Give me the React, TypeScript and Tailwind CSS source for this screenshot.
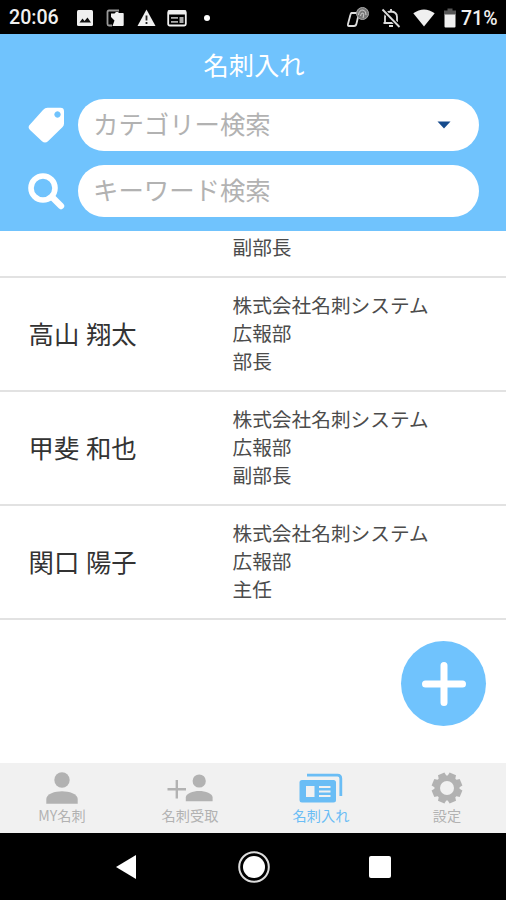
import type { ReactNode } from "react";

type Card = {
  name: string;
  company: string;
  department: string;
  title: string;
};

const cards: Card[] = [
  { name: "高山 翔太", company: "株式会社名刺システム", department: "広報部", title: "部長" },
  { name: "甲斐 和也", company: "株式会社名刺システム", department: "広報部", title: "副部長" },
  { name: "関口 陽子", company: "株式会社名刺システム", department: "広報部", title: "主任" },
];

function StatusBar() {
  return (
    <div className="flex h-[34px] shrink-0 items-center bg-black pt-0.5 pl-[9px] pr-[7px] text-[#f0f0f0]">
      <span className="w-[67px] font-[Roboto] text-[19.6px] leading-5 font-medium">
        20:06
      </span>
      {/* Notification icons */}
      <svg width="18" height="18" viewBox="0 0 18 18" className="mr-[12px]">
        <rect x="1" y="1" width="16" height="16" rx="1.5" fill="currentColor" />
        <path d="M3.5 13.5 L6.5 9.5 L8.5 12 L11.5 8.5 L15 13.5Z" fill="#111" />
      </svg>
      <svg width="18" height="18" viewBox="0 0 18 18" className="mr-[13px]">
        <path d="M13 1.5H3Q1.5 1.5 1.5 3V15Q1.5 16.5 3 16.5H6" fill="none" stroke="#999" strokeWidth="1.8" />
        <path d="M5 4.5H8.5L10 3H12L13 4H17Q17.700 4 17.7 4.7V16Q17.7 17 16.7 17H6.5L8.5 11.5L5 8Z" fill="currentColor" />
      </svg>
      <svg width="19" height="18" viewBox="0 0 19 18" className="mr-[11px]">
        <path d="M9.5 0.5L18.5 17H0.5Z" fill="currentColor" />
        <path d="M8.6 6.5h1.8v5H8.6zM8.6 13h1.8v2H8.6z" fill="#222" />
      </svg>
      <svg width="20" height="18" viewBox="0 0 20 18" className="mr-[17px]">
        <rect x="1.2" y="2" width="17.6" height="14.5" rx="1.5" fill="none" stroke="currentColor" strokeWidth="1.8" />
        <path d="M1 1.5h18v4H1z" fill="currentColor" />
        <path d="M4 8h7v1.8H4zM4 12h7v1.8H4zM12.5 8h4v6h-4z" fill="#aaa" />
      </svg>
      <span className="size-[6px] rounded-full bg-white" />

      {/* System icons */}
      <div className="ml-auto flex items-center">
        <svg width="24" height="24" viewBox="0 0 24 24" className="mr-[11px]" fill="none">
          <path d="M5.5 7H13L10.5 17.5Q10 20 8 20H3Q1.5 20 2 18L4.5 8.5Q4.8 7 6 7Z" stroke="#ddd" strokeWidth="1.8" strokeLinejoin="round" />
          <circle cx="16.5" cy="7.5" r="6" fill="#777" stroke="#aaa" />
          <path d="M12.5 9Q13 4 17 4Q20.5 5 20 9M14.5 10Q15 6.5 17 7Q18.5 8 17 12" stroke="#ccc" />
        </svg>
        <svg width="20" height="22" viewBox="0 0 20 22" className="mr-[12px]" fill="none" stroke="#ddd" strokeWidth="1.8">
          <path d="M4 16V10Q4 5 10 4.5Q16 5 16 10V15" />
          <path d="M2.5 16H16M10 2V5M8 19H12" />
          <path d="M1.5 2.5L18.5 20" stroke="#000" strokeWidth="4" />
          <path d="M1.5 2.5L18.5 20" />
        </svg>
        <svg width="22" height="18" viewBox="0 0 22 18" className="mr-[9px]">
          <path d="M0.3 4.3Q11 -3.5 21.7 4.3L11 17.5Z" fill="currentColor" />
        </svg>
        <svg width="12" height="20" viewBox="0 0 12 20" className="mr-[5px]">
          <path d="M3.5 0.5h5v2H12V7H0V2.5h3.5z" fill="#555" />
          <path d="M0.5 6.5h11V18.5Q11.5 19.5 10.5 19.5H1.5Q.5 19.5 .5 18.5Z" fill="currentColor" />
        </svg>
        <span className="w-[38px] pt-px font-[Roboto] text-[19.5px] leading-5 font-medium">71%</span>
      </div>
    </div>
  );
}

function SearchHeader() {
  return (
    <header className="flex h-[197px] shrink-0 flex-col bg-[#70c3fd] pl-[27px]">
      <h1 className="mt-[12px] h-[37px] w-[454px] text-center text-[25.3px] leading-[36px] text-white">
        名刺入れ
      </h1>
      <div className="mt-[16px] flex items-center">
        <svg width="38" height="38" viewBox="0 0 38 38" className="mr-[13px]">
          <path
            fillRule="evenodd"
            d="M20.5 1.8H33.5Q37 1.8 37 5.2V17.5Q37 19.5 35.6 21L21 35.2Q18 38 15 35.2L3 24Q.2 21.3 3 18.6L16 4Q18 1.8 20.5 1.8ZM30.5 5.3a3.2 3.2 0 1 0 .01 0Z"
            fill="#fff"
          />
        </svg>
        <button className="flex h-[52px] w-[401px] items-center justify-between rounded-full bg-white pl-[15px] pr-[28px] text-[25.4px] leading-[36px] text-[#b2b2b2]">
          <span className="pb-[4px]">カテゴリー検索</span>
          <svg width="14" height="8" viewBox="0 0 14 8">
            <path d="M0.5 0.5H13.5L7 7.5Z" fill="#164b8d" />
          </svg>
        </button>
      </div>
      <div className="mt-[14px] flex items-center">
        <svg width="38" height="38" viewBox="0 0 38 38" className="mr-[13px]" fill="none" stroke="#fff">
          <circle cx="16" cy="16" r="12" strokeWidth="5.6" />
          <path d="M25.5 25.5L34 34" strokeWidth="6.4" strokeLinecap="round" />
        </svg>
        <input
          placeholder="キーワード検索"
          className="h-[52px] w-[401px] rounded-full bg-white px-[15px] pb-[4px] text-[25.4px] leading-[36px] outline-none placeholder:text-[#b2b2b2]"
        />
      </div>
    </header>
  );
}

function CardRow({ card }: { card: Card }) {
  return (
    <li className="flex h-[114px] items-center border-b-2 border-[#e2e2e2] pb-0.5 pl-[28.5px]">
      <p className="w-[204px] text-[25.4px] leading-9 text-[#333] [word-spacing:1px]">{card.name}</p>
      <div className="text-[19.7px] leading-[28.3px] text-[#4c4c4c]">
        <p>{card.company}</p>
        <p>{card.department}</p>
        <p>{card.title}</p>
      </div>
    </li>
  );
}

function Tab({ label, className, children }: { label: string; className: string; children: ReactNode }) {
  return (
    <button className={`flex shrink-0 flex-col items-center pt-[7px] ${className}`}>
      <span className="flex h-[35px] items-center">{children}</span>
      <span className="text-[14.2px] leading-5">{label}</span>
    </button>
  );
}

function TabBar() {
  return (
    <nav className="flex h-[70px] shrink-0 bg-[#f1f1f1] text-[#b2b2b2]">
      <Tab label="MY名刺" className="w-[124px]">
        <svg width="32" height="32" viewBox="0 0 32 32" fill="currentColor">
          <circle cx="16" cy="8" r="7.7" />
          <path d="M.3 31.7V27C.3 22 9 19.3 16 19.3S31.7 22 31.7 27V31.7Z" />
        </svg>
      </Tab>
      <Tab label="名刺受取" className="w-[132px]">
        <svg width="46" height="28" viewBox="0 0 46 28" fill="currentColor">
          <path d="M8.6 6h2.4v8H19v2.4h-8v8H8.6v-8H.5V14h8.1z" />
          <circle cx="32.2" cy="7" r="6.6" />
          <path d="M18.8 27.3V23.5C18.8 19.5 26 17 32.2 17S45.6 19.5 45.6 23.5V27.3Z" />
        </svg>
      </Tab>
      <Tab label="名刺入れ" className="w-[130px] text-[#6abdf5]">
        <svg width="44" height="30" viewBox="0 0 44 30">
          <path d="M8 2.2H38.5Q41.8 2.2 41.8 5.5V23" fill="none" stroke="currentColor" strokeWidth="2.8" />
          <rect x="0.5" y="7" width="36.5" height="22.5" rx="2.5" fill="currentColor" />
          <path d="M7 13h8.5v11H7zM20 13h11.5v2H20zM20 17.5h11.5v2H20zM20 22h11.5v2H20z" fill="#f1f1f1" />
        </svg>
      </Tab>
      <Tab label="設定" className="w-[122px]">
        <svg width="32" height="32" viewBox="0 0 32 32">
          <g fill="currentColor">
            <path d="M11.5 7L12.5 0.8h7L20.5 7V25L19.5 31.2h-7L11.5 25Z" transform="rotate(22.5 16 16)" />
            <path d="M11.5 7L12.5 0.8h7L20.5 7V25L19.5 31.2h-7L11.5 25Z" transform="rotate(67.5 16 16)" />
            <path d="M11.5 7L12.5 0.8h7L20.5 7V25L19.5 31.2h-7L11.5 25Z" transform="rotate(112.5 16 16)" />
            <path d="M11.5 7L12.5 0.8h7L20.5 7V25L19.5 31.2h-7L11.5 25Z" transform="rotate(157.5 16 16)" />
            <circle cx="16" cy="16" r="12.5" />
          </g>
          <circle cx="16" cy="16" r="7" fill="#f1f1f1" />
        </svg>
      </Tab>
    </nav>
  );
}

function SystemNav() {
  return (
    <div className="flex h-[67px] shrink-0 items-center bg-black pl-[115px]">
      <svg width="22" height="26" viewBox="0 0 22 26" className="mr-[100px]">
        <path d="M21 1V25L1 13Z" fill="#fff" />
      </svg>
      <svg width="34" height="34" viewBox="0 0 34 34" className="mr-[98px]">
        <circle cx="17" cy="17" r="14.8" fill="none" stroke="#ddd" strokeWidth="2" />
        <circle cx="17" cy="17" r="11" fill="#fff" />
      </svg>
      <span className="size-[22px] rounded-[2px] bg-white" />
    </div>
  );
}

export default function App() {
  return (
    <div className="flex h-[900px] w-[506px] flex-col overflow-hidden bg-white font-['Noto_Sans_CJK_JP',sans-serif]">
      <StatusBar />
      <SearchHeader />
      <main className="relative min-h-0 flex-1 overflow-hidden">
        {/* The first row is scrolled partly under the header */}
        <div className="h-[47px] border-b-2 border-[#e2e2e2] pt-[2px] pl-[232.5px] text-[19.7px] leading-[28.3px] text-[#4c4c4c]">
          副部長
        </div>
        <ul>
          {cards.map((card) => (
            <CardRow key={card.name} card={card} />
          ))}
        </ul>
        <button
          aria-label="追加"
          className="absolute right-[20px] bottom-[37px] flex size-[85px] items-center justify-center rounded-full bg-[#70c3fd]"
        >
          <svg width="46" height="46" viewBox="0 0 46 46" stroke="#fff" strokeWidth="7" strokeLinecap="round">
            <path d="M23 4.5V41.5M4.5 23H41.5" />
          </svg>
        </button>
      </main>
      <TabBar />
      <SystemNav />
    </div>
  );
}
